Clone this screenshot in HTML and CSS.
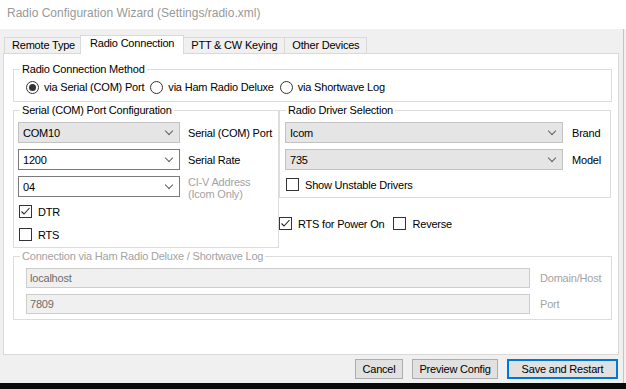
FILE: index.html
```html
<!DOCTYPE html>
<html lang="en">
<head>
  <meta charset="UTF-8" />
  <title>Radio Configuration Wizard (Settings/radio.xml)</title>
  <link rel="stylesheet" href="styles.css">
</head>
<body>

  <div class="titlebar">Radio Configuration Wizard (Settings/radio.xml)</div>

  <div class="window">
    <div class="tabs">
      <div class="tab">Remote Type</div>
      <div class="tab active">Radio Connection</div>
      <div class="tab">PTT &amp; CW Keying</div>
      <div class="tab">Other Devices</div>
    </div>

    <div class="panel">
      <fieldset class="group">
        <legend>Radio Connection Method</legend>
        <div class="method-row">
          <label class="opt"><span class="radio on"></span>via Serial (COM) Port</label>
          <label class="opt"><span class="radio"></span>via Ham Radio Deluxe</label>
          <label class="opt"><span class="radio"></span>via Shortwave Log</label>
        </div>
      </fieldset>

      <div class="split">
        <fieldset class="group serial">
          <legend>Serial (COM) Port Configuration</legend>
          <div class="group-body">
            <div class="field">
              <div class="combo locked"><span>COM10</span></div>
              <span class="field-label">Serial (COM) Port</span>
            </div>
            <div class="field">
              <div class="combo"><span>1200</span></div>
              <span class="field-label">Serial Rate</span>
            </div>
            <div class="field">
              <div class="combo"><span>04</span></div>
              <span class="field-label muted two-line">CI-V Address<br>(Icom Only)</span>
            </div>
            <label class="check"><span class="box"><svg width="11" height="11" viewBox="0 0 11 11"><polyline points="1.5,5.5 4,8 9.5,2" fill="none" stroke="#222" stroke-width="1.1"/></svg></span>DTR</label>
            <label class="check"><span class="box"></span>RTS</label>
          </div>
        </fieldset>

        <div class="driver-col">
          <fieldset class="group driver">
            <legend>Radio Driver Selection</legend>
            <div class="group-body">
              <div class="field">
                <div class="combo locked wide"><span>Icom</span></div>
                <span class="field-label">Brand</span>
              </div>
              <div class="field">
                <div class="combo locked wide"><span>735</span></div>
                <span class="field-label">Model</span>
              </div>
              <label class="check"><span class="box"></span>Show Unstable Drivers</label>
            </div>
          </fieldset>
          <div class="power-row">
            <label class="check"><span class="box"><svg width="11" height="11" viewBox="0 0 11 11"><polyline points="1.5,5.5 4,8 9.5,2" fill="none" stroke="#222" stroke-width="1.1"/></svg></span>RTS for Power On</label>
            <label class="check"><span class="box"></span>Reverse</label>
          </div>
        </div>
      </div>

      <fieldset class="group disabled">
        <legend>Connection via Ham Radio Deluxe / Shortwave Log</legend>
        <div class="group-body">
          <div class="field">
            <div class="textbox">localhost</div>
            <span class="field-label muted">Domain/Host</span>
          </div>
          <div class="field">
            <div class="textbox">7809</div>
            <span class="field-label muted">Port</span>
          </div>
        </div>
      </fieldset>
    </div>

    <div class="actions">
      <button class="btn cancel">Cancel</button>
      <button class="btn preview">Preview Config</button>
      <button class="btn save">Save and Restart</button>
    </div>
  </div>

  <div class="taskbar"></div>

</body>
</html>
```

FILE: styles.css
```css
* {
  margin: 0;
  padding: 0;
  box-sizing: border-box;
}

body {
  width: 626px;
  height: 389px;
  overflow: hidden;
  display: flex;
  flex-direction: column;
  background: #f0f0f0;
  font-family: 'Liberation Sans', Arial, sans-serif;
  font-size: 11px;
  letter-spacing: -0.2px;
  color: #000;
}

.titlebar {
  height: 29px;
  line-height: 26px;
  padding-left: 7px;
  background: #fff;
  color: #999;
  font-size: 12px;
  letter-spacing: 0;
}

.window {
  flex: 1;
  width: 624px;
  padding: 6px 4px 0 3px;
  border-right: 1px solid #c4c4c4;
  display: flex;
  flex-direction: column;
}

/* tabs */

.tabs {
  display: flex;
  align-items: flex-end;
  height: 18px;
  padding-left: 1px;
}

.tab {
  height: 16px;
  line-height: 15px;
  padding: 0 7px;
  margin-right: -1px;
  border: 1px solid #d9d9d9;
  border-bottom: none;
  background: #f0f0f0;
  white-space: nowrap;
}

.tab.active {
  position: relative;
  z-index: 1;
  height: 19px;
  line-height: 15px;
  padding: 0 9px;
  margin: 0 -1px -1px -2px;
  background: #fff;
}

.panel {
  height: 302px;
  padding: 8px 6px 0 9px;
  border: 1px solid #d9d9d9;
  background: #fff;
}

/* group boxes */

.group {
  border: 1px solid #dcdcdc;
  min-width: 0;
}

.group legend {
  margin-left: 6px;
  padding: 0 2px;
  line-height: 14px;
}

.group-body {
  display: flex;
  flex-direction: column;
  gap: 6px;
  padding: 5px 4px 4px 4px;
}

.method-row {
  display: flex;
  align-items: center;
  gap: 6px;
  height: 14px;
  margin: 4px 12px 7px;
}

.opt {
  display: flex;
  align-items: center;
  gap: 5px;
  white-space: nowrap;
}

.radio {
  width: 13px;
  height: 13px;
  border: 1px solid #333;
  border-radius: 50%;
  display: flex;
  align-items: center;
  justify-content: center;
}

.radio.on::after {
  content: '';
  width: 7px;
  height: 7px;
  border-radius: 50%;
  background: #333;
}

.split {
  display: flex;
  align-items: flex-start;
  margin-top: 1px;
}

.serial {
  width: 266px;
}

.driver-col {
  flex: 1;
  margin-right: 1px;
}

.driver .group-body {
  padding-left: 5px;
}

.power-row {
  display: flex;
  gap: 9px;
  margin-top: 17px;
}

/* fields */

.field {
  display: flex;
  align-items: center;
  height: 21px;
}

.combo {
  width: 162px;
  height: 21px;
  display: flex;
  align-items: center;
  padding: 0 7px 0 4px;
  border: 1px solid #7a7a7a;
  background: #fff;
}

.combo span {
  flex: 1;
}

.combo::after {
  content: '';
  width: 5px;
  height: 5px;
  margin-top: -4px;
  border-right: 1px solid #606060;
  border-bottom: 1px solid #606060;
  transform: rotate(45deg);
}

.combo.locked {
  background: #e5e5e5;
  border-color: #c2c2c2;
}

.combo.wide {
  width: 278px;
}

.field-label {
  margin-left: 8px;
  white-space: nowrap;
}

.driver .field-label {
  margin-left: 9px;
}

.muted {
  color: #a3a3a3;
}

.two-line {
  line-height: 12px;
  margin-top: 2px;
}

.check {
  display: flex;
  align-items: center;
  gap: 6px;
  height: 17px;
  padding-left: 1px;
  white-space: nowrap;
}

.power-row .check {
  padding-left: 0;
}

.box {
  width: 13px;
  height: 13px;
  border: 1px solid #333;
  background: #fff;
  display: flex;
  align-items: center;
  justify-content: center;
}

/* disabled connection group */

.disabled {
  margin-top: 1px;
}

.disabled legend {
  color: #a3a3a3;
}

.disabled .group-body {
  padding: 5px 4px 5px 12px;
}

.textbox {
  width: 504px;
  height: 20px;
  line-height: 18px;
  padding-left: 3px;
  border: 1px solid #cccccc;
  background: #f0f0f0;
  color: #6d6d6d;
}

.disabled .field {
  height: 20px;
}

.disabled .field-label {
  margin-left: 10px;
}

/* buttons */

.actions {
  display: flex;
  justify-content: flex-end;
  gap: 9px;
  margin-top: 4px;
  padding-right: 1px;
}

.btn {
  height: 20px;
  border: 1px solid #adadad;
  background: #e1e1e1;
  font-family: inherit;
  font-size: 11px;
  letter-spacing: -0.2px;
  color: #000;
}

.cancel {
  width: 48px;
}

.preview {
  width: 86px;
}

.save {
  width: 111px;
  border-color: #0078d7;
  box-shadow: inset 0 0 0 1px #0078d7;
}

.taskbar {
  height: 6px;
  background: #0a0a0a;
}
```
